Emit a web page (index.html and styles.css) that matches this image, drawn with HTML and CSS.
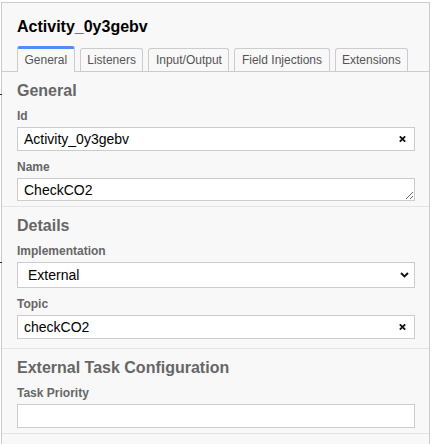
FILE: index.html
```html
<!DOCTYPE html>
<html lang="en">
<head>
<meta charset="utf-8">
<title>Properties</title>
<link rel="stylesheet" href="styles.css">
</head>
<body>
<span class="tick tick-a"></span>
<span class="tick tick-b"></span>
<div class="panel">
  <div class="header">
    <div class="title">Activity_0y3gebv</div>
  </div>
  <ul class="tabs">
    <li class="tab active">General</li>
    <li class="tab">Listeners</li>
    <li class="tab">Input/Output</li>
    <li class="tab">Field Injections</li>
    <li class="tab">Extensions</li>
  </ul>
  <div class="content">
    <div class="group">
      <div class="group-title">General</div>
      <div class="entry">
        <label class="label" for="f-id">Id</label>
        <div class="field">
          <input id="f-id" class="input" type="text" value="Activity_0y3gebv">
          <span class="clear"><svg width="7" height="7" viewBox="0 0 7 7"><path d="M0.8 0.8 L6.2 6.2 M6.2 0.8 L0.8 6.2" stroke="#111" stroke-width="1.8" fill="none"/></svg></span>
        </div>
      </div>
      <div class="entry">
        <label class="label" for="f-name">Name</label>
        <div class="field">
          <textarea id="f-name" class="textarea">CheckCO2</textarea>
        </div>
      </div>
    </div>
    <div class="group group-details">
      <div class="group-title">Details</div>
      <div class="entry">
        <label class="label" for="f-impl">Implementation</label>
        <div class="field">
          <select id="f-impl" class="select">
            <option>External</option>
          </select>
          <span class="chevron"><svg width="9" height="6" viewBox="0 0 9 6"><path d="M1 1 L4.5 4.5 L8 1" stroke="#111" stroke-width="1.9" fill="none"/></svg></span>
        </div>
      </div>
      <div class="entry">
        <label class="label" for="f-topic">Topic</label>
        <div class="field">
          <input id="f-topic" class="input" type="text" value="checkCO2">
          <span class="clear"><svg width="7" height="7" viewBox="0 0 7 7"><path d="M0.8 0.8 L6.2 6.2 M6.2 0.8 L0.8 6.2" stroke="#111" stroke-width="1.8" fill="none"/></svg></span>
        </div>
      </div>
    </div>
    <div class="group">
      <div class="group-title">External Task Configuration</div>
      <div class="entry">
        <label class="label" for="f-prio">Task Priority</label>
        <div class="field">
          <input id="f-prio" class="input" type="text" value="">
        </div>
      </div>
    </div>
  </div>
</div>
</body>
</html>
```

FILE: styles.css
```css
* {
  box-sizing: border-box;
}

html,
body {
  margin: 0;
  padding: 0;
  background: #ffffff;
}

body {
  position: relative;
  font-family: "Liberation Sans", Arial, sans-serif;
  color: #000;
}

.tick {
  position: absolute;
  left: 0;
  width: 2px;
  height: 1px;
  background: #222;
}

.tick-a {
  top: 94px;
}

.tick-b {
  top: 262px;
}

.panel {
  margin: 2px 0 0 1px;
  width: 429px;
  height: 442px;
  border: 1px solid #ccc;
  border-bottom: none;
  background: #f8f8f8;
}

.header {
  padding: 15px 15px 0 15px;
}

.title {
  font-size: 16px;
  line-height: 18px;
  font-weight: bold;
  color: #000;
}

.tabs {
  list-style: none;
  margin: 10px 0 0 0;
  padding: 0 0 0 15px;
  display: flex;
  align-items: flex-end;
  gap: 5px;
  border-bottom: 1px solid #ccc;
}

.tab {
  font-size: 12px;
  line-height: 14px;
  color: #555;
  padding: 4px 6.5px;
  border: 1px solid #ccc;
  border-bottom: none;
  border-radius: 3px 3px 0 0;
  background: #f8f8f8;
  white-space: nowrap;
}

.tab.active {
  border-top: 3px solid #4d8ef8;
  padding-bottom: 5px;
  margin-bottom: -1px;
}

.group {
  padding: 10px 14px 5px 15px;
  border-bottom: 1px solid #e4e4e4;
}

.group-details {
  padding-bottom: 9px;
}

.group-title {
  font-size: 16px;
  line-height: 18px;
  font-weight: bold;
  color: #666;
  margin-bottom: 9px;
}

.entry + .entry {
  margin-top: 9px;
}

.label {
  display: block;
  font-size: 12px;
  line-height: 14px;
  font-weight: bold;
  color: #666;
  margin-bottom: 4px;
}

.field {
  position: relative;
}

.input,
.textarea,
.select {
  display: block;
  width: 100%;
  margin: 0;
  border: 1px solid #ccc;
  border-radius: 0;
  background: #fff;
  color: #000;
  font-family: "Liberation Sans", Arial, sans-serif;
  font-size: 14px;
  outline: none;
}

.input {
  height: 24px;
  line-height: 16px;
  padding: 0 24px 0 6px;
}

.textarea {
  height: 23px;
  line-height: 16px;
  padding: 3px 6px 2px 6px;
  resize: vertical;
  overflow: hidden;
}

.select {
  height: 26px;
  line-height: 16px;
  padding: 0 24px 0 10px;
  appearance: none;
  -webkit-appearance: none;
}

.clear {
  position: absolute;
  right: 9px;
  top: 50%;
  transform: translateY(-50%);
  display: flex;
  width: 7px;
  height: 7px;
}

.chevron {
  position: absolute;
  right: 6px;
  top: 50%;
  transform: translateY(-50%);
  display: flex;
  width: 9px;
  height: 6px;
}
```
